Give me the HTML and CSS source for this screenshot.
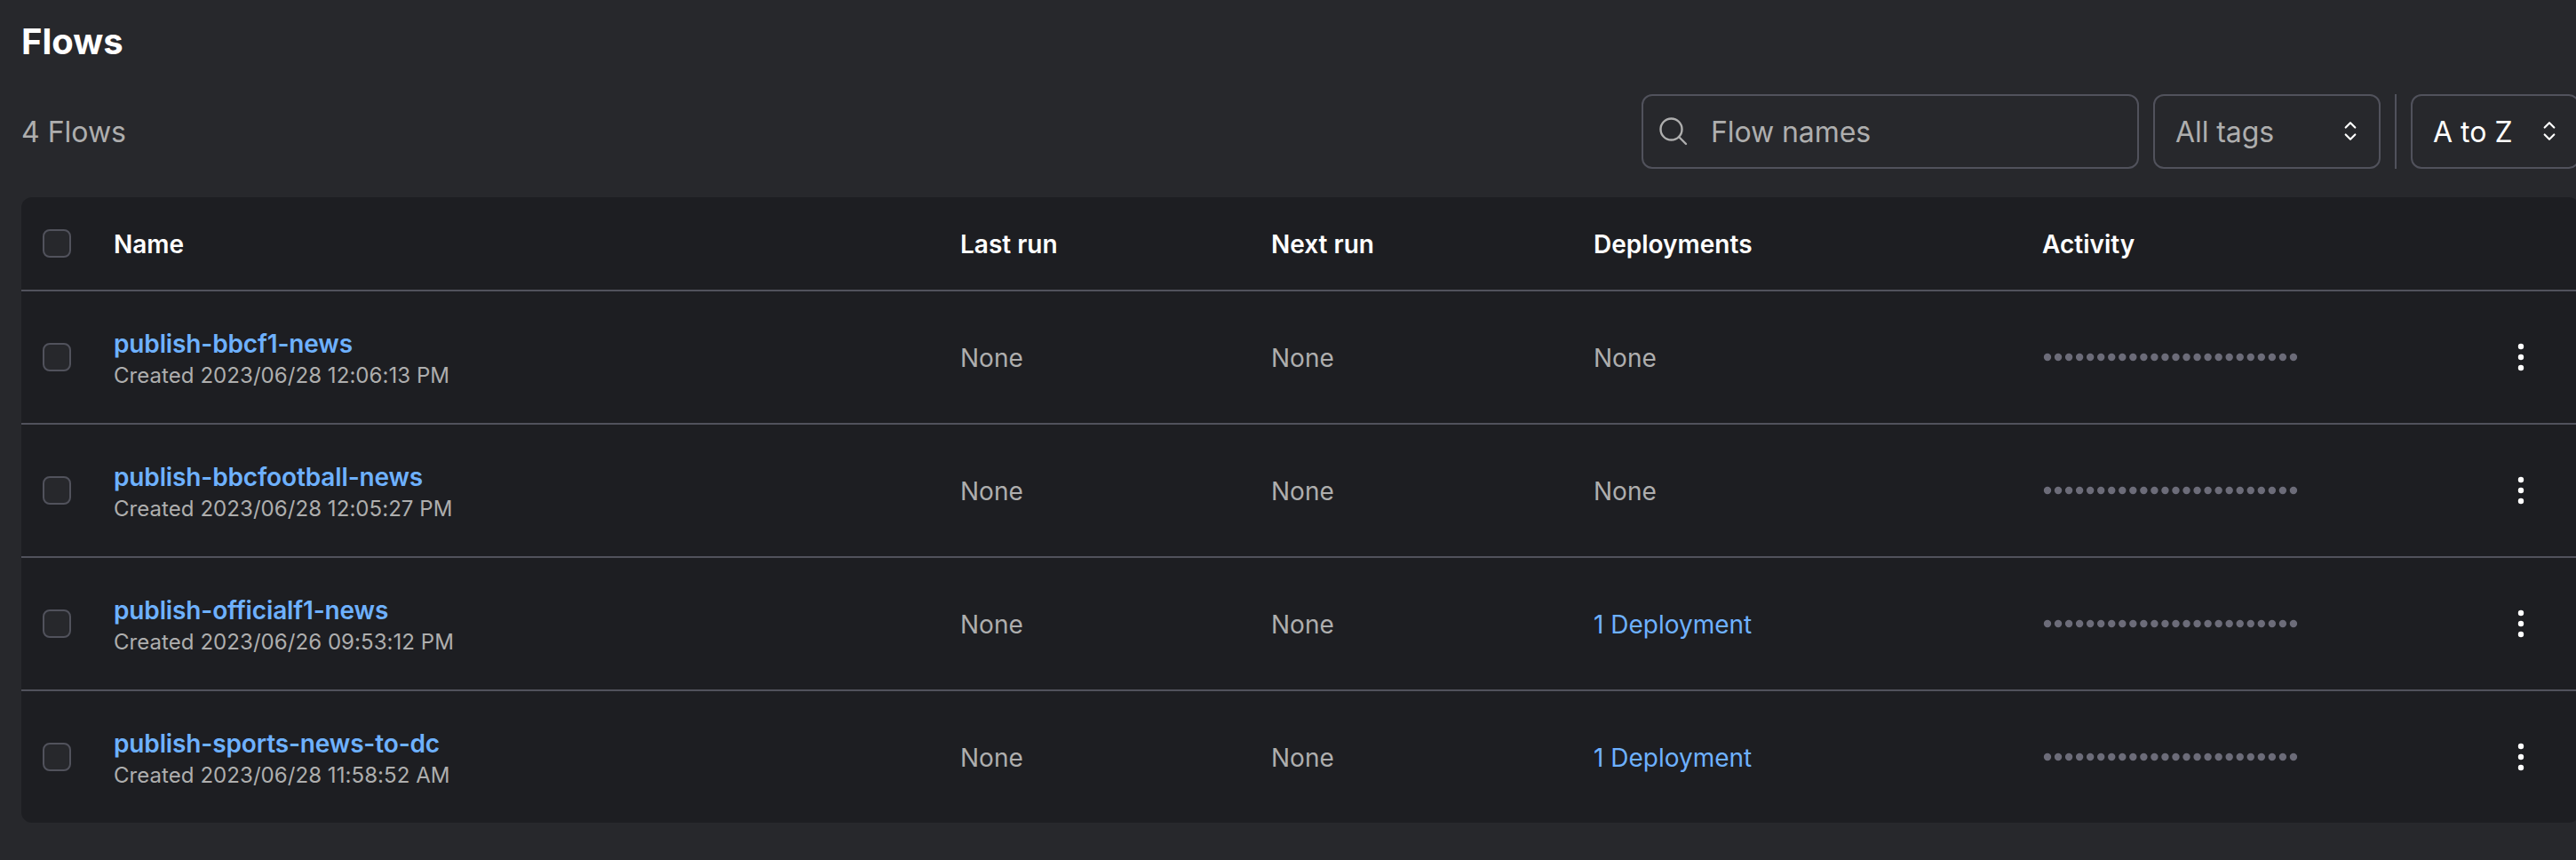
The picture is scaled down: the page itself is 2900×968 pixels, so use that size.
FILE: index.html
```html
<!DOCTYPE html>
<html lang="en">
<head>
<meta charset="utf-8">
<title>Flows</title>
<link rel="stylesheet" href="styles.css">
</head>
<body>
<main class="page">
  <h1 class="title">Flows</h1>
  <div class="toolbar">
    <div class="count">4 Flows</div>
    <div class="search">
      <svg class="search-icon" viewBox="0 0 40 40"><circle cx="17.5" cy="17.5" r="12"/><path d="M26 26l8 8"/></svg>
      <span class="placeholder">Flow names</span>
    </div>
    <div class="select select-tags"><span class="placeholder">All tags</span><svg class="chevrons" viewBox="0 0 16 24"><path d="M2.7 7.5L8 2.2l5.300 5.300M2.700 15.500L8 20.800l5.300-5.300"/></svg></div>
    <div class="divider"></div>
    <div class="select select-sort"><span class="value">A to Z</span><svg class="chevrons" viewBox="0 0 16 24"><path d="M2.7 7.5L8 2.2l5.300 5.300M2.700 15.500L8 20.800l5.300-5.300"/></svg></div>
  </div>
  <section class="table" id="table">
    <div class="row head">
      <span class="checkbox"></span><span class="cell">Name</span><span class="cell">Last run</span><span class="cell">Next run</span><span class="cell">Deployments</span><span class="cell">Activity</span>
    </div>
  </section>
</main>
<script src="app.js"></script>
</body>
</html>
```
FILE: styles.css
```css
* { box-sizing: border-box; }
body { margin: 0; width: 2900px; height: 968px; overflow: hidden; background: #27282c; color: #fff; font-family: Inter, sans-serif; }
.page { width: 2904px; padding-left: 24px; }
.title { margin: 0; padding-top: 19px; height: 106px; font-size: 40px; line-height: 56px; font-weight: 700; }
.toolbar { display: flex; align-items: center; gap: 16px; height: 84px; margin-bottom: 32px; font-size: 32px; line-height: 48px; }
.count { flex: 1; padding-top: 2px; color: #aeaeae; }
.search { display: flex; align-items: center; width: 560px; height: 84px; padding-left: 14px; border: 2px solid #51525c; border-radius: 12px; }
.search-icon { width: 40px; height: 40px; margin-right: 22px; fill: none; stroke: #aeaeae; stroke-width: 2.4; stroke-linecap: round; }
.placeholder { padding-top: 2px; color: #aeaeae; letter-spacing: -0.08px; }
.value { padding-top: 2px; }
.select { display: flex; align-items: center; justify-content: space-between; height: 84px; padding: 0 24px 0 23px; border: 2px solid #51525c; border-radius: 12px; }
.select-tags { width: 256px; }
.select-sort { width: 190px; }
.chevrons { width: 16px; height: 24px; fill: none; stroke: #fff; stroke-width: 2.2; stroke-linecap: round; stroke-linejoin: round; }
.divider { width: 2px; height: 84px; background: #51525c; }
.table { height: 704px; background: #1d1e22; border-radius: 12px; overflow: hidden; font-size: 28px; line-height: 40px; }
.row { display: grid; grid-template-columns: 80px 953px 350px 363px 505px 534px 1fr; align-items: center; height: 150px; padding-left: 24px; border-bottom: 2px solid #51525c; color: #aeaeae; }
.row:last-child { border-bottom: 0; height: 148px; }
.head { height: 106px; color: #fff; font-weight: 600; }
.cell { padding-top: 2px; }
.checkbox { width: 32px; height: 32px; background: #27282c; border: 2px solid #51525c; border-radius: 8px; }
.identity { padding-top: 1px; }
.name { display: block; font-weight: 600; line-height: 40px; letter-spacing: -0.14px; }
.link { color: #6eb1ff; }
.created { display: block; font-size: 24px; line-height: 32px; letter-spacing: 0.06px; }
.activity { width: 288px; height: 10px; margin-left: 1px; fill: #6c6c79; }
.menu { width: 10px; height: 34px; fill: #fff; }
```
FILE: app.js
```js
const flows = [
  ["publish-bbcf1-news", "2023/06/28 12:06:13 PM", ""],
  ["publish-bbcfootball-news", "2023/06/28 12:05:27 PM", ""],
  ["publish-officialf1-news", "2023/06/26 09:53:12 PM", "1 Deployment"],
  ["publish-sports-news-to-dc", "2023/06/28 11:58:52 AM", "1 Deployment"]
];
const dots = Array.from({ length: 24 }, (_, i) => `<circle cx="${5 + i * 12.04}" cy="5" r="4.2"/>`).join("");
document.getElementById("table").insertAdjacentHTML("beforeend", flows.map(([name, created, deployment]) => `
  <div class="row">
    <span class="checkbox"></span>
    <div class="identity"><span class="name link">${name}</span><span class="created">Created ${created}</span></div>
    <span class="cell">None</span>
    <span class="cell">None</span>
    <span class="cell ${deployment ? "link" : ""}">${deployment || "None"}</span>
    <svg class="activity" viewBox="0 0 288 10">${dots}</svg>
    <svg class="menu" viewBox="0 0 10 34"><circle cx="5" cy="5" r="3.2"/><circle cx="5" cy="17" r="3.2"/><circle cx="5" cy="29" r="3.2"/></svg>
  </div>`).join(""));
```
